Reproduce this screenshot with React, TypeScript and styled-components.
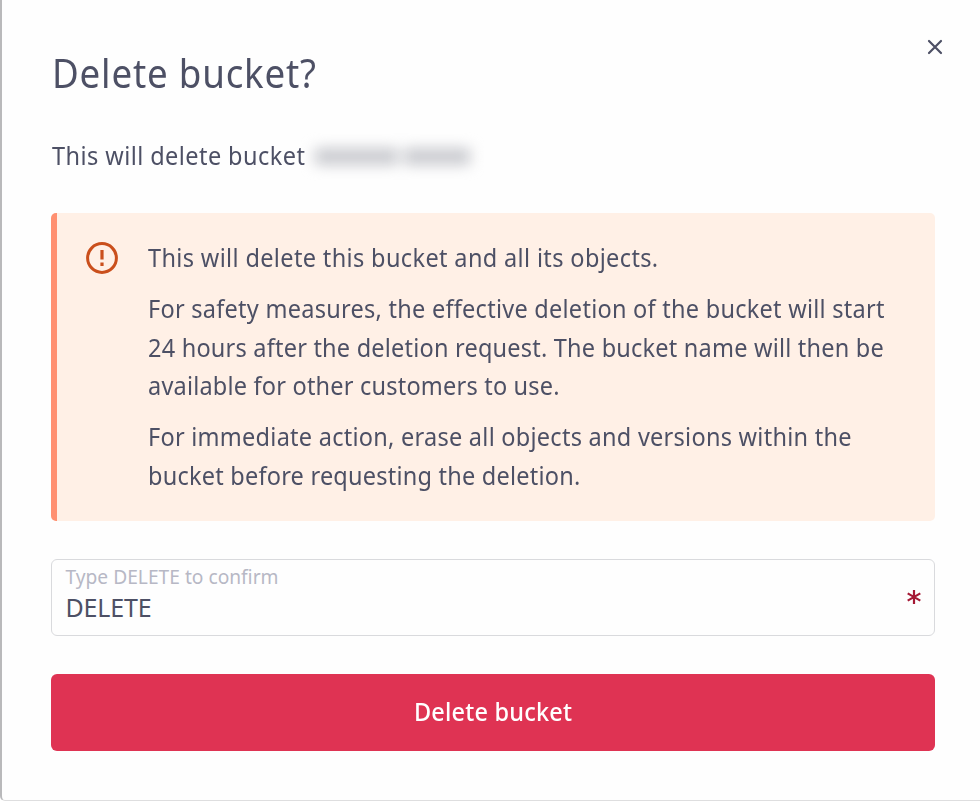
import React, { useState } from "react";
import styled, { createGlobalStyle } from "styled-components";

const GlobalStyle = createGlobalStyle`
  *, *::before, *::after { box-sizing: border-box; }
  body { margin: 0; background: #fff; overflow: hidden; }
  body, input, button { font-family: "Noto Sans", sans-serif; }
`;

const Dialog = styled.main`
  display: flex;
  flex-direction: column;
  width: 980px;
  height: 801px;
  padding: 0 45px 0 49px;
  color: #4d5065;
  background: #fefefe;
  border-left: 2px solid #b9b9bb;
  border-bottom: 1px solid #dededf;
  border-bottom-left-radius: 5px;
`;

const Header = styled.header`
  display: flex;
  justify-content: space-between;
  height: 135px;
`;

const Title = styled.h1`
  margin: 43px 0 0 1px;
  font-size: 39.5px;
  line-height: 60px;
  font-weight: 400;
  white-space: nowrap;
  letter-spacing: 0.85px;
  transform: scaleX(0.93);
  transform-origin: left;
`;

const CloseButton = styled.button`
  width: 24px;
  height: 24px;
  margin: 35px -11.5px 0 0;
  padding: 0;
  border: 0;
  background: none;
  color: #4d5065;
`;

const CrossIcon = styled.svg`
  display: block;
  width: 24px;
  height: 24px;
`;

const Intro = styled.p`
  display: flex;
  align-items: center;
  height: 40px;
  margin: 0 0 38px 0.5px;
`;

const Line = styled.span<{ $spacing: number }>`
  display: block;
  width: max-content;
  font-size: 25.3px;
  line-height: 38.4px;
  white-space: nowrap;
  letter-spacing: ${({ $spacing }) => $spacing}px;
  transform: scaleX(0.93);
  transform-origin: left;
`;

const HiddenName = styled.span`
  display: flex;
  gap: 6px;
  margin: 3px 0 0 -9px;
  filter: blur(7px);
`;

const NamePart = styled.span<{ $width: number }>`
  width: ${({ $width }) => $width}px;
  height: 17px;
  background: #c9cacf;
`;

const Warning = styled.section`
  display: flex;
  height: 307.5px;
  padding: 25.6px 30px 25.6px 29px;
  border-left: 6px solid #ff9071;
  border-radius: 5px;
  background: #fff0e6;
`;

const WarningIcon = styled.svg`
  flex: none;
  width: 32px;
  height: 32px;
  margin: 3.4px 29.5px 0 0;
`;

const Paragraphs = styled.div`
  display: flex;
  flex-direction: column;
  gap: 12.8px;
  min-width: 0;
  margin-top: -0.4px;
`;

const Paragraph = styled.p`
  margin: 0;
`;

const Field = styled.label`
  display: flex;
  align-items: center;
  justify-content: space-between;
  height: 77px;
  margin: 38.5px 0 38px;
  padding: 0 13px 0 13.5px;
  border: 1px solid #d9dadd;
  border-radius: 6px;
`;

const FieldBody = styled.span`
  display: flex;
  flex: 1;
  flex-direction: column;
  height: 75px;
  padding-top: 3px;
`;

const FieldLabel = styled.span`
  color: #b7b8c5;
  font-size: 19.2px;
  line-height: 28px;
  white-space: nowrap;
`;

const Input = styled.input`
  width: 400px;
  height: 34px;
  margin-top: -1px;
  padding: 0;
  border: 0;
  outline: 0;
  background: none;
  color: #4d5065;
  font-size: 25px;
  letter-spacing: -0.15px;
`;

const RequiredIcon = styled.svg`
  width: 14px;
  height: 14px;
  margin-top: -1px;
`;

const DeleteButton = styled.button`
  flex: none;
  height: 77px;
  padding: 0 0 3px;
  border: 0;
  border-radius: 6px;
  background: #df3353;
  color: #fff;
  font-size: 25.3px;
  font-weight: 500;
`;

const ButtonText = styled.span`
  display: inline-block;
  letter-spacing: 0.2px;
  transform: scaleX(0.93);
`;

const warningText = [
  [{ text: "This will delete this bucket and all its objects.", spacing: 0.38 }],
  [
    { text: "For safety measures, the effective deletion of the bucket will start", spacing: 0.27 },
    { text: "24 hours after the deletion request. The bucket name will then be", spacing: 0.22 },
    { text: "available for other customers to use.", spacing: 0.21 },
  ],
  [
    { text: "For immediate action, erase all objects and versions within the", spacing: 0.27 },
    { text: "bucket before requesting the deletion.", spacing: 0.23 },
  ],
];

export default function App() {
  const [value, setValue] = useState("DELETE");
  return (
    <>
      <GlobalStyle />
      <Dialog>
        <Header>
          <Title>Delete bucket?</Title>
          <CloseButton aria-label="Close">
            <CrossIcon viewBox="0 0 24 24" fill="none" stroke="currentColor" strokeWidth="2.2" strokeLinecap="round">
              <path d="M6 6 18 18M18 6 6 18" />
            </CrossIcon>
          </CloseButton>
        </Header>
        <Intro>
          <Line $spacing={0.46}>This will delete bucket</Line>
          <HiddenName>
            <NamePart $width={83} />
            <NamePart $width={66} />
          </HiddenName>
        </Intro>
        <Warning>
          <WarningIcon viewBox="0 0 32 32" fill="none">
            <circle cx="16" cy="16" r="14.4" stroke="#ca4f1c" strokeWidth="3" />
            <path d="M16 8v9.6M16 20.6v3.3" stroke="#ca4f1c" strokeWidth="3.2" />
          </WarningIcon>
          <Paragraphs>
            {warningText.map((lines) => (
              <Paragraph key={lines[0].text}>
                {lines.map((line) => (
                  <Line key={line.text} $spacing={line.spacing}>{line.text}</Line>
                ))}
              </Paragraph>
            ))}
          </Paragraphs>
        </Warning>
        <Field>
          <FieldBody>
            <FieldLabel>Type DELETE to confirm</FieldLabel>
            <Input value={value} onChange={(event) => setValue(event.target.value)} />
          </FieldBody>
          <RequiredIcon viewBox="0 0 14 14" stroke="#a51935" strokeWidth="2.2">
            <path d="M7 0v14M.7 3.4l12.6 7.2M13.3 3.4.7 10.6" />
          </RequiredIcon>
        </Field>
        <DeleteButton>
          <ButtonText>Delete bucket</ButtonText>
        </DeleteButton>
      </Dialog>
    </>
  );
}
